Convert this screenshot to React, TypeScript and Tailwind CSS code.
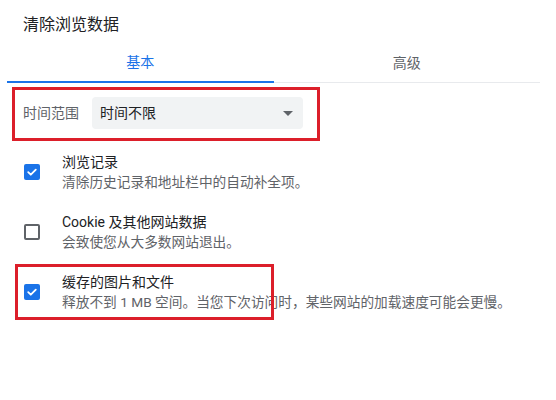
const items = [
  {
    title: "浏览记录",
    desc: "清除历史记录和地址栏中的自动补全项。",
    checked: true,
  },
  {
    title: "Cookie 及其他网站数据",
    desc: "会致使您从大多数网站退出。",
    checked: false,
  },
  {
    title: "缓存的图片和文件",
    desc: "释放不到 1 MB 空间。当您下次访问时，某些网站的加载速度可能会更慢。",
    checked: true,
  },
];

const Checkbox = ({ checked }: { checked: boolean }) => {
  if (!checked) {
    return <div className="h-4 w-4 flex-none rounded-[2px] border-2 border-[#5f6368]" />;
  }
  return (
    <div className="flex h-4 w-4 flex-none items-center justify-center rounded-[2px] bg-[#1a73e8]">
      <svg width="12" height="12" viewBox="0 0 12 12" fill="none">
        <path d="M2.2 6.2 L4.8 8.7 L9.8 3.6" stroke="white" strokeWidth="1.8" strokeLinecap="round" strokeLinejoin="round" />
      </svg>
    </div>
  );
};

export default function App() {
  return (
    <div className="relative h-[400px] w-[556px] overflow-hidden bg-white font-['Roboto','Noto_Sans_CJK_SC',sans-serif]">
      <div className="pl-[23px] pt-[14px] text-[16px] leading-[22px] text-[#202124]">清除浏览数据</div>

      <div className="ml-[7px] mt-[7px] flex w-[533px] border-b border-[#e8eaed]">
        <div className="-mb-px flex h-[40px] flex-1 items-center justify-center border-b-2 border-[#1a73e8] text-[14px] text-[#1a73e8]">
          基本
        </div>
        <div className="-mb-px flex h-[40px] flex-1 items-center justify-center text-[14px] text-[#5f6368]">
          高级
        </div>
      </div>

      <div className="mt-[14px] flex items-center pl-[23px]">
        <span className="w-[69px] text-[14px] text-[#5f6368]">时间范围</span>
        <div className="flex h-[32px] w-[211px] items-center justify-between rounded-[4px] bg-[#f1f3f4] pl-[8px] pr-[10px] text-[14px] text-[#202124]">
          <span>时间不限</span>
          <svg width="10" height="5" viewBox="0 0 10 5">
            <path d="M0 0 L10 0 L5 5 Z" fill="#5f6368" />
          </svg>
        </div>
      </div>

      <div className="mt-[23px] flex flex-col gap-[20px]">
        {items.map((item, idx) => (
          <div key={`item-${idx}`} className="flex items-center pl-[24px]">
            <Checkbox checked={item.checked} />
            <div className="ml-[22px] flex flex-col">
              <span className="text-[14px] leading-[20px] text-[#202124]">{item.title}</span>
              <span className="text-[13.7px] leading-[20px] text-[#5f6368]">{item.desc}</span>
            </div>
          </div>
        ))}
      </div>

      {/* red annotation boxes */}
      <div className="absolute left-[12px] top-[87px] h-[54px] w-[308px] border-[3px] border-[#dc1f2a]" />
      <div className="absolute left-[15px] top-[264px] h-[56px] w-[259px] border-[3px] border-[#dc1f2a]" />
    </div>
  );
}
